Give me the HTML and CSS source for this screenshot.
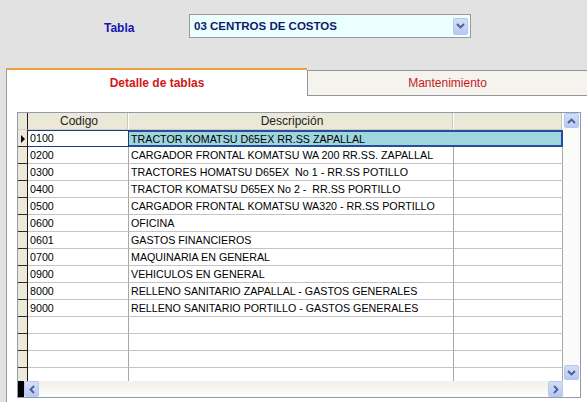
FILE: index.html
```html
<!DOCTYPE html>
<html>
<head>
<meta charset="utf-8">
<link rel="stylesheet" href="styles.css">
</head>
<body>
<div class="top">
  <div class="label">Tabla</div>
  <div class="combo">
    <span class="combo-text">03 CENTROS DE COSTOS</span>
    <span class="sbtn combo-btn"><svg width="9" height="6" viewBox="0 0 9 6"><polyline points="1,1 4.5,4.5 8,1" fill="none" stroke="#4a5f8c" stroke-width="1.8"/></svg></span>
  </div>
</div>
<div class="tabs">
  <div class="tab tab-active">Detalle de tablas</div>
  <div class="tab tab-inactive">Mantenimiento</div>
</div>
<div class="panel">
  <div class="grid">
    <div class="grid-main">
      <div class="cols">
        <div class="row head">
          <div class="c ind"></div>
          <div class="c cod">Codigo</div>
          <div class="c desc">Descripción</div>
          <div class="c last"></div>
        </div>
        <div class="row sel">
          <div class="c ind"><span class="arrow"></span></div>
          <div class="c cod">0100</div>
          <div class="c desc">TRACTOR KOMATSU D65EX RR.SS ZAPALLAL</div>
          <div class="c last"></div>
        </div>
        <div class="row"><div class="c ind"></div><div class="c cod">0200</div><div class="c desc">CARGADOR FRONTAL KOMATSU WA 200 RR.SS. ZAPALLAL</div><div class="c last"></div></div>
        <div class="row"><div class="c ind"></div><div class="c cod">0300</div><div class="c desc">TRACTORES HOMATSU D65EX  No 1 - RR.SS POTILLO</div><div class="c last"></div></div>
        <div class="row"><div class="c ind"></div><div class="c cod">0400</div><div class="c desc">TRACTOR KOMATSU D65EX No 2 -  RR.SS PORTILLO</div><div class="c last"></div></div>
        <div class="row"><div class="c ind"></div><div class="c cod">0500</div><div class="c desc">CARGADOR FRONTAL KOMATSU WA320 - RR.SS PORTILLO</div><div class="c last"></div></div>
        <div class="row"><div class="c ind"></div><div class="c cod">0600</div><div class="c desc">OFICINA</div><div class="c last"></div></div>
        <div class="row"><div class="c ind"></div><div class="c cod">0601</div><div class="c desc">GASTOS FINANCIEROS</div><div class="c last"></div></div>
        <div class="row"><div class="c ind"></div><div class="c cod">0700</div><div class="c desc">MAQUINARIA EN GENERAL</div><div class="c last"></div></div>
        <div class="row"><div class="c ind"></div><div class="c cod">0900</div><div class="c desc">VEHICULOS EN GENERAL</div><div class="c last"></div></div>
        <div class="row"><div class="c ind"></div><div class="c cod">8000</div><div class="c desc">RELLENO SANITARIO ZAPALLAL - GASTOS GENERALES</div><div class="c last"></div></div>
        <div class="row"><div class="c ind"></div><div class="c cod">9000</div><div class="c desc">RELLENO SANITARIO PORTILLO - GASTOS GENERALES</div><div class="c last"></div></div>
        <div class="row"><div class="c ind"></div><div class="c cod"></div><div class="c desc"></div><div class="c last"></div></div>
        <div class="row"><div class="c ind"></div><div class="c cod"></div><div class="c desc"></div><div class="c last"></div></div>
        <div class="row"><div class="c ind"></div><div class="c cod"></div><div class="c desc"></div><div class="c last"></div></div>
        <div class="row"><div class="c ind"></div><div class="c cod"></div><div class="c desc"></div><div class="c last"></div></div>
      </div>
      <div class="vscroll">
        <span class="sbtn"><svg width="9" height="6" viewBox="0 0 9 6"><polyline points="1,5 4.5,1.5 8,5" fill="none" stroke="#4a5f8c" stroke-width="1.8"/></svg></span>
        <span class="sbtn"><svg width="9" height="6" viewBox="0 0 9 6"><polyline points="1,1 4.5,4.5 8,1" fill="none" stroke="#4a5f8c" stroke-width="1.8"/></svg></span>
      </div>
    </div>
    <div class="hscroll">
      <span class="hbar"></span>
      <span class="sbtn"><svg width="6" height="9" viewBox="0 0 6 9"><polyline points="5,1 1.5,4.5 5,8" fill="none" stroke="#4a5f8c" stroke-width="1.8"/></svg></span>
      <span class="htrack"></span>
      <span class="sbtn"><svg width="6" height="9" viewBox="0 0 6 9"><polyline points="1,1 4.5,4.5 1,8" fill="none" stroke="#4a5f8c" stroke-width="1.8"/></svg></span>
      <span class="corner"></span>
    </div>
  </div>
</div>
</body>
</html>
```
FILE: styles.css
```css
html, body { margin: 0; padding: 0; }
body {
  width: 587px;
  height: 402px;
  overflow: hidden;
  background: #e2e2e2;
  font-family: "Liberation Sans", Arial, sans-serif;
}
.top { height: 68px; display: flex; align-items: flex-start; }
.label {
  margin: 21px 0 0 104px;
  width: 85px;
  font-weight: bold;
  font-size: 12px;
  line-height: 14px;
  color: #1616b4;
}
.combo {
  margin-top: 14px;
  width: 282px;
  height: 24px;
  box-sizing: border-box;
  border: 1px solid #9a9a9a;
  background: #ebffff;
  display: flex;
  align-items: center;
  justify-content: space-between;
  padding: 0 2px 0 4px;
}
.combo-text { font-weight: bold; font-size: 11.5px; color: #0c1c6c; }
.sbtn {
  width: 15px;
  height: 15px;
  box-sizing: border-box;
  border: 1px solid #b7c6ee;
  border-radius: 2px;
  background: linear-gradient(#d4defa, #b6c8f4);
  display: flex;
  align-items: center;
  justify-content: center;
}
.combo-btn { height: 17px; }
.tabs { display: flex; height: 28px; padding-left: 6px; }
.tab {
  box-sizing: border-box;
  display: flex;
  align-items: center;
  justify-content: center;
  font-size: 12px;
}
.tab-active {
  width: 301px;
  background: #fff;
  border-top: 2px solid #eba23c;
  border-left: 1px solid #9c9c9c;
  color: #d11818;
  font-weight: bold;
  padding-bottom: 1px;
}
.tab-inactive {
  flex: 1;
  margin-top: 2px;
  background: #f4f3ee;
  border: 1px solid #959595;
  border-right: 0;
  color: #c41c1c;
}
.panel {
  margin-left: 6px;
  height: 306px;
  box-sizing: border-box;
  background: #fff;
  border-left: 1px solid #9c9c9c;
  padding: 16px 0 0 10px;
}
.grid {
  width: 564px;
  box-sizing: border-box;
  border: 1px solid #8f9cae;
}
.grid-main { display: flex; height: 268px; }
.cols { width: 545px; overflow: hidden; }
.row { display: flex; height: 17px; }
.c {
  box-sizing: border-box;
  height: 17px;
  border-bottom: 1px solid #c4c4c4;
  border-right: 1px solid #a8a8a8;
  font-size: 10.7px;
  line-height: 17px;
  padding-left: 2px;
  white-space: pre;
  overflow: hidden;
  color: #000;
}
.ind {
  width: 10px;
  background: #ece9d8;
  border-right: 1px solid #1a1a1a;
  border-bottom: 1px solid #2a2a2a;
  padding: 0;
  position: relative;
}
.cod { width: 101px; }
.desc { width: 325px; }
.last { width: 109px; }
.head .c {
  background: #ebe8d8;
  border-bottom: 1px solid #d2cfbf;
  border-right: 1px solid #fff;
  box-shadow: inset -1px 0 0 #cbc7b6;
  font-size: 12px;
  line-height: 16px;
  text-align: center;
  color: #222;
}
.head .ind { border-right: 1px solid #1a1a1a; box-shadow: none; }
.sel .cod { border: 1px solid #1d3a84; border-left: 0; line-height: 15px; }
.sel .desc {
  background: #9fd5dc;
  border-top: 2px solid #264c9e;
  border-bottom: 2px solid #264c9e;
  border-right: 0;
  line-height: 14px;
}
.sel .last {
  background: #9fd5dc;
  border-top: 2px solid #264c9e;
  border-bottom: 2px solid #264c9e;
  border-right: 2px solid #264c9e;
}
.arrow {
  position: absolute;
  left: 3px;
  top: 5px;
  width: 0;
  height: 0;
  border-top: 4px solid transparent;
  border-bottom: 4px solid transparent;
  border-left: 4px solid #000;
}
.vscroll {
  width: 17px;
  background: #fbfbf9;
  display: flex;
  flex-direction: column;
  justify-content: space-between;
  align-items: center;
  padding: 0 0 1px 0;
  box-sizing: border-box;
}
.hscroll {
  display: flex;
  height: 16px;
  background: linear-gradient(#f1f0ea, #fdfdfb);
  align-items: stretch;
}
.hscroll .sbtn { height: 16px; }
.hbar { width: 6px; background: #000; }
.htrack { flex: 1; }
.corner { width: 17px; background: #fff; }
```
